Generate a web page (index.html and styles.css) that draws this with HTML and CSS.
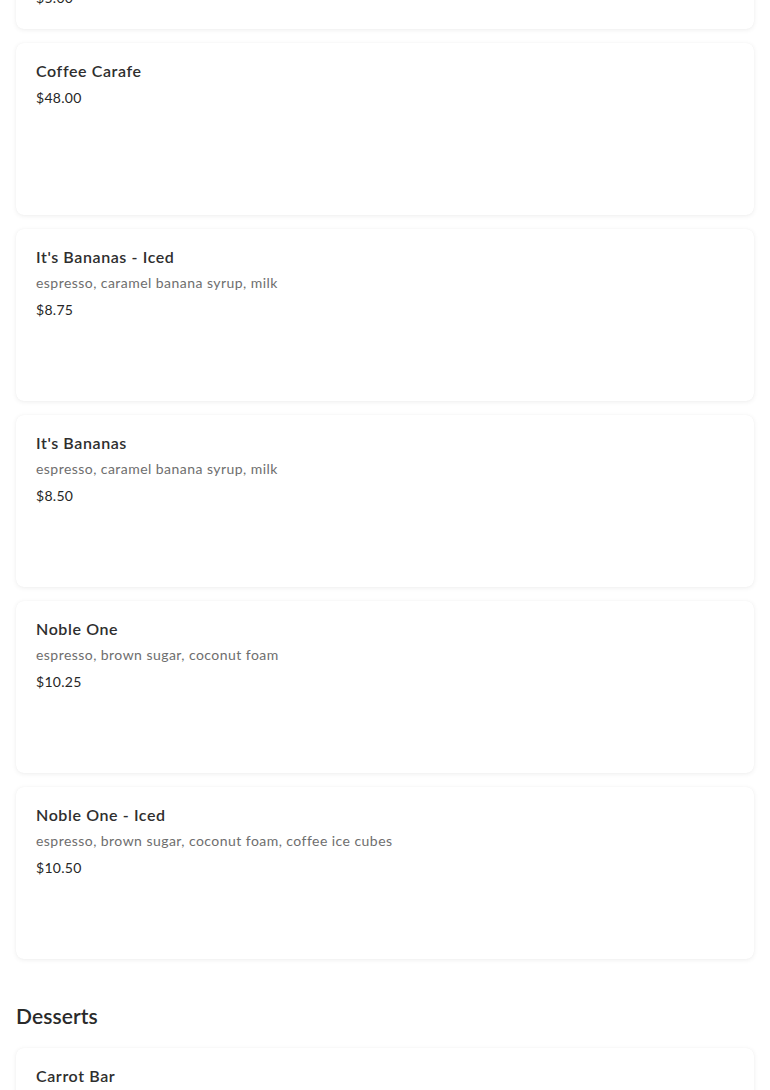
FILE: index.html
```html
<!DOCTYPE html>
<html lang="en">
<head>
<meta charset="utf-8">
<title>Menu</title>
<link rel="stylesheet" href="styles.css">
</head>
<body>
<main class="menu">
  <section class="section">
    <div class="card card-end">
      <p class="price">$5.00</p>
    </div>
    <div class="card">
      <h3 class="title">Coffee Carafe</h3>
      <p class="price">$48.00</p>
    </div>
    <div class="card">
      <h3 class="title">It's Bananas - Iced</h3>
      <p class="desc">espresso, caramel banana syrup, milk</p>
      <p class="price">$8.75</p>
    </div>
    <div class="card">
      <h3 class="title">It's Bananas</h3>
      <p class="desc">espresso, caramel banana syrup, milk</p>
      <p class="price">$8.50</p>
    </div>
    <div class="card">
      <h3 class="title">Noble One</h3>
      <p class="desc">espresso, brown sugar, coconut foam</p>
      <p class="price">$10.25</p>
    </div>
    <div class="card">
      <h3 class="title">Noble One - Iced</h3>
      <p class="desc">espresso, brown sugar, coconut foam, coffee ice cubes</p>
      <p class="price">$10.50</p>
    </div>
  </section>
  <section class="section">
    <h2 class="section-title">Desserts</h2>
    <div class="card">
      <h3 class="title">Carrot Bar</h3>
      <p class="price">$6.00</p>
    </div>
  </section>
</main>
</body>
</html>
```
FILE: styles.css
```css
html, body {
  margin: 0;
  padding: 0;
  background: #ffffff;
}
body {
  font-family: "Lato", "Inter", "Liberation Sans", sans-serif;
  color: #2b2b2b;
  overflow: hidden;
}
.menu {
  padding: 0 16px;
  margin-top: -143px;
  display: flex;
  flex-direction: column;
  gap: 40px;
}
.section {
  display: flex;
  flex-direction: column;
  gap: 14px;
}
.section-title {
  margin: 0 0 1px;
  font-size: 21px;
  line-height: 34px;
  font-weight: 600;
  color: #2a2a2a;
  letter-spacing: 0.1px;
}
.card {
  box-sizing: border-box;
  min-height: 172px;
  padding: 16px 20px 20px;
  background: #fff;
  border-radius: 8px;
  box-shadow: 0 1px 5px rgba(0, 0, 0, 0.07), 0 0 1px rgba(0, 0, 0, 0.05);
  display: flex;
  flex-direction: column;
}
.card-end {
  justify-content: flex-end;
}
.title {
  margin: 0;
  font-size: 16px;
  line-height: 24px;
  font-weight: 600;
  color: #2e2e2e;
  letter-spacing: 0.6px;
}
.desc {
  margin: 2px 0 0;
  font-size: 14px;
  line-height: 24px;
  color: #6e6e6e;
  letter-spacing: 0.45px;
}
.price {
  margin: 4px 0 0;
  font-size: 14px;
  line-height: 22px;
  color: #262626;
  letter-spacing: 0.3px;
}
```
